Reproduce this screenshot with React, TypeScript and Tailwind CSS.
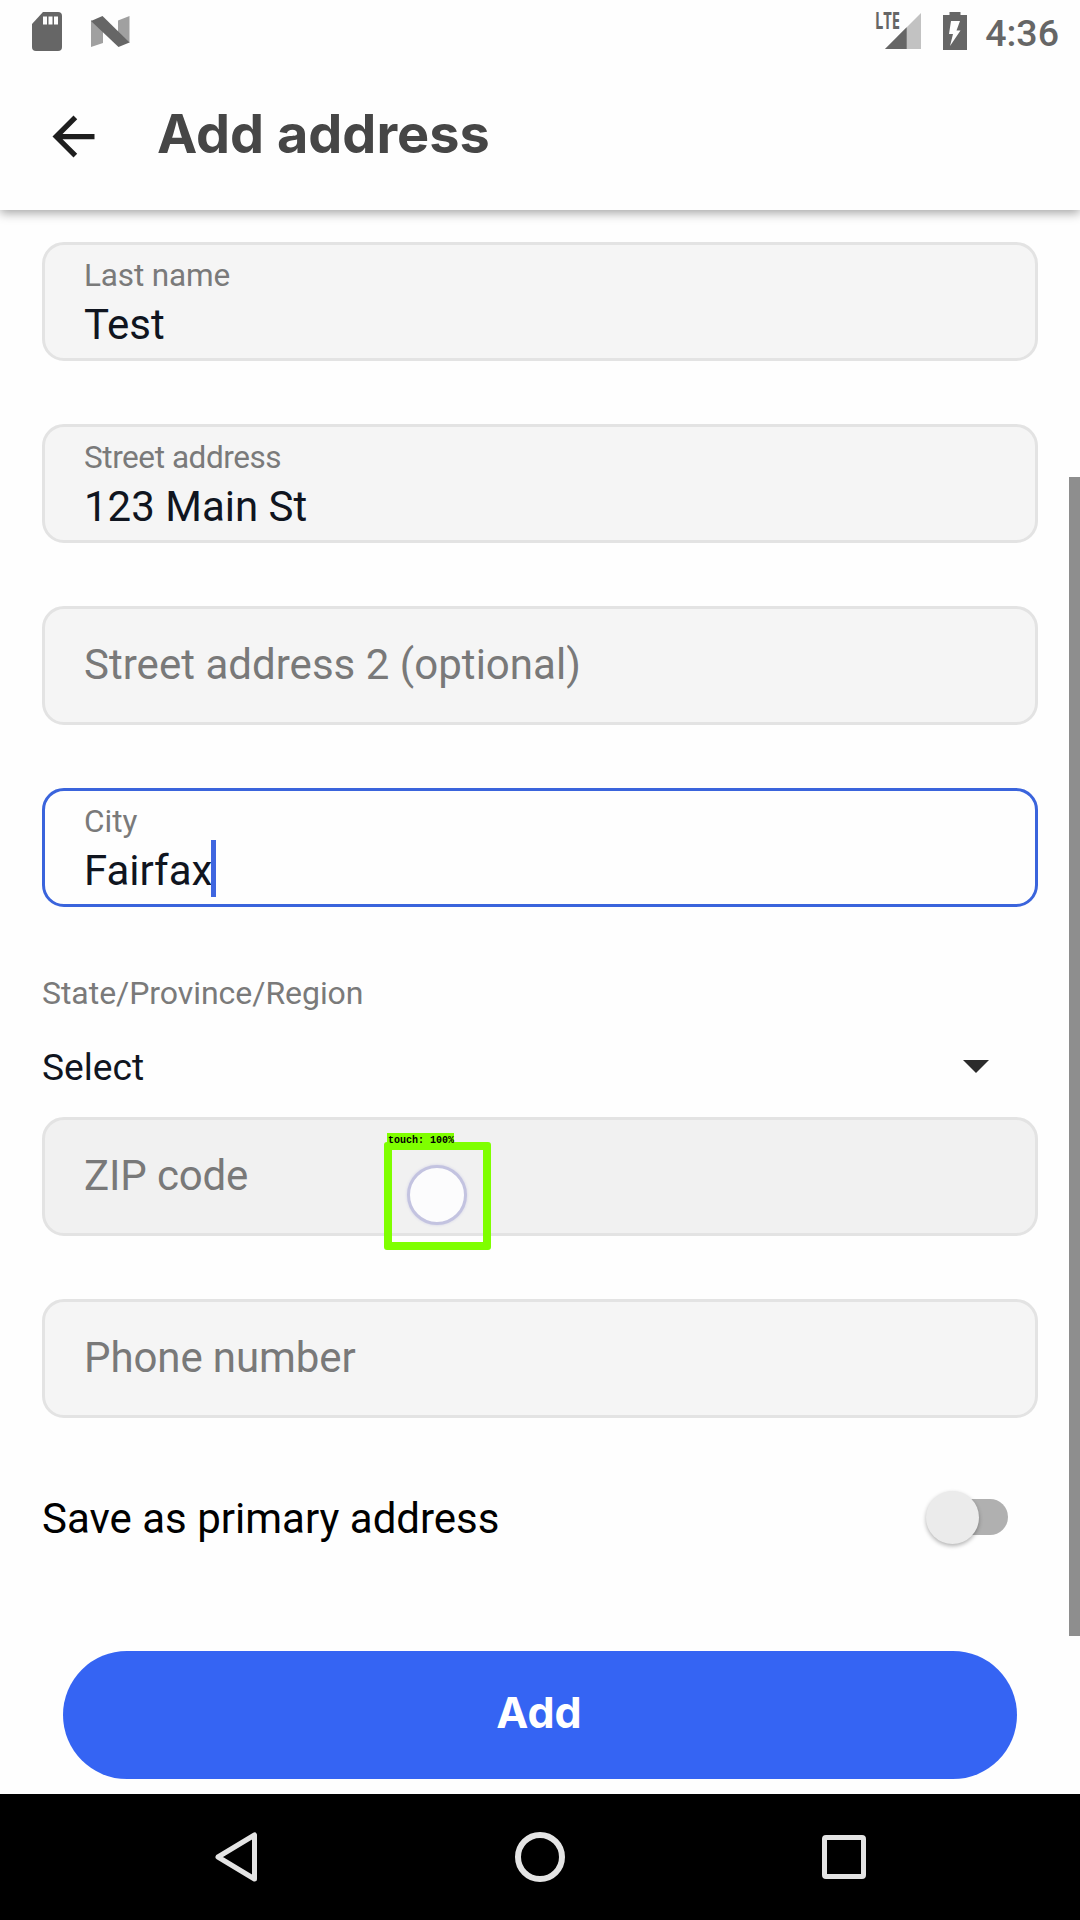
import React from "react";

type FieldProps = {
  label: string;
  value?: string;
  focused?: boolean;
  shade?: string;
  tracking?: string;
};

function Field({ label, value, focused, shade = "bg-[#f5f5f5]", tracking = "tracking-[0.03px]" }: FieldProps) {
  const frame = focused ? "border-[#3a64dc] bg-[#fefefe]" : "border-[#e3e3e3] " + shade;
  return (
    <div className={"flex h-[119px] w-full shrink-0 flex-col rounded-[22px] border-[3px] px-[39px] " + frame}>
      {value ? (
        <>
          <div className={"mt-[12px] h-[38px] text-[31.5px] leading-[38px] text-[#7a7a7a] " + tracking}>{label}</div>
          <div className="mt-[5px] flex h-[56px] items-start text-[42px] leading-[50px] text-[#10151f]">
            <span>{value}</span>
            {focused && <span className="-ml-[1px] -mt-[6px] h-[57px] w-[5px] shrink-0 bg-[#3f66e0]" />}
          </div>
        </>
      ) : (
        <div className={"mt-[31px] text-[42px] leading-[50px] text-[#797979] " + tracking}>{label}</div>
      )}
    </div>
  );
}

function StatusBar() {
  return (
    <div className="flex h-[63px] items-start justify-between pl-[32px] pr-[21px] text-[#666666]">
      <div className="flex pt-[12px]">
        <svg width="30" height="39" viewBox="0 0 30 39">
          <path fill="currentColor" d="M11 0H26Q30 0 30 4V35Q30 39 26 39H4Q0 39 0 35V12Z" />
          <path fill="#fefefe" d="M11 4.500h4v8h-4zM16.500 4.500h4v8h-4zM22 4.500h4v8h-4z" />
        </svg>
        <svg className="ml-[29px] mt-[4px]" width="39" height="31" viewBox="0 0 39 31">
          <path fill="#a0a0a0" d="M0 4L12 12V27L0 31ZM27 4.500L38.500 0V27L27 18Z" />
          <path fill="currentColor" d="M0 5L11.500 0L38.500 26.500L27.500 31Z" />
        </svg>
      </div>
      <div className="flex">
        <div className="relative mt-[13px] h-[36px] w-[45px]">
          <svg width="45" height="36" viewBox="0 0 45 36">
            <path fill="#c2c2c2" d="M45 0V36H9Z" />
            <path fill="currentColor" d="M30.700 14.300V36H9Z" />
          </svg>
          <span className="absolute -left-px -top-[4px] origin-left scale-x-[0.64] font-['Open_Sans'] text-[23px] font-bold leading-[23px]">LTE</span>
        </div>
        <svg className="ml-[22px] mt-[12px]" width="24" height="38" viewBox="0 0 24 38">
          <path fill="currentColor" d="M6.500 0H17.500V3H24V38H0V3H6.500Z" />
          <path fill="#fefefe" d="M8 9H17L13.500 18.500H17.500L7 34L10 22H6Z" />
        </svg>
        <span className="ml-[18px] mt-[11px] text-[37.5px] font-medium leading-[44px]">4:36</span>
      </div>
    </div>
  );
}

function TouchMarker() {
  return (
    <div className="absolute left-[384px] top-[1142px] h-[108px] w-[107px] rounded-[3px] border-[8px] border-[#7fff00]">
      <span className="absolute -left-[5px] -top-[17px] h-[12px] w-[67px] whitespace-pre bg-[#7fff00] pl-px font-['Liberation_Mono'] text-[10px] font-bold leading-[15px] text-black">touch: 100%</span>
      <div className="absolute left-[15px] top-[15px] h-[60px] w-[60px] rounded-full border-[3px] border-[#c3c3e0] bg-[#fcfcfd] shadow-[0_0_3px_#d0d0e6]" />
    </div>
  );
}

export default function App() {
  return (
    <div className="relative flex h-[1920px] w-[1080px] flex-col overflow-hidden bg-[#fefefe] font-['Roboto',sans-serif]">
      <header className="z-10 h-[210px] shrink-0 bg-[#fefefe] shadow-[0_3px_10px_rgba(0,0,0,0.36)]">
        <StatusBar />
        <div className="flex pl-[42px]">
          <svg className="mt-[42px]" width="63" height="63" viewBox="0 0 24 24">
            <path fill="#1e1e1e" d="M20 11H7.830l5.590-5.590L12 4l-8 8 8 8 1.410-1.410L7.830 13H20v-2z" />
          </svg>
          <h1 className="ml-[52px] mt-[39px] font-['Inter'] text-[54px] font-bold leading-[64px] text-[#464646]">Add address</h1>
        </div>
      </header>
      <main className="flex h-[1584px] shrink-0 flex-col px-[42px] pt-[32px]">
        <div className="flex flex-col gap-[63px]">
          <Field label="Last name" value="Test" tracking="tracking-[-0.15px]" />
          <Field label="Street address" value="123 Main St" tracking="tracking-[-0.43px]" />
          <Field label="Street address 2 (optional)" />
          <Field label="City" value="Fairfax" focused />
        </div>
        <div className="mt-[67px] h-[38px] text-[32px] leading-[38px] tracking-[-0.05px] text-[#7a7a7a]">State/Province/Region</div>
        <div className="mt-[33px] flex h-[44px] items-start justify-between pr-[49px] text-[37.2px] leading-[44px] text-[#10151f]">
          <span>Select</span>
          <svg className="mt-[15px]" width="26" height="13" viewBox="0 0 26 13"><path fill="#2b2b2b" d="M0 0H26L13 13Z" /></svg>
        </div>
        <div className="mt-[28px] flex flex-col gap-[63px]">
          <Field label="ZIP code" shade="bg-[#f1f1f1]" tracking="tracking-[-0.15px]" />
          <Field label="Phone number" tracking="tracking-[-0.1px]" />
        </div>
        <div className="mt-[72px] flex h-[58px] items-start justify-between pr-[30px] text-[42px] leading-[58px] text-black">
          <span>Save as primary address</span>
          <div className="mt-px flex h-[53px] w-[83px] items-center">
            <span className="z-10 ml-px h-[53px] w-[53px] rounded-full bg-[#ebebeb] shadow-[0_2px_4px_rgba(0,0,0,0.3)]" />
            <span className="-mt-px -ml-[31px] h-[36px] w-[60px] rounded-full bg-[#b0b0b0]" />
          </div>
        </div>
        <button className="mx-[21px] mt-[103px] h-[128px] shrink-0 rounded-full bg-[#3564f3] pb-[7px] pr-[2px] font-['Inter'] text-[43px] font-bold leading-[50px] text-white">Add</button>
      </main>
      <nav className="flex h-[126px] shrink-0 items-center justify-between bg-black pl-[215px] pr-[214px]">
        <svg width="44" height="50" viewBox="0 0 44 50"><path fill="none" stroke="#e4e4e4" strokeWidth="5" strokeLinejoin="round" d="M39.500 3V47L3 25Z" /></svg>
        <span className="mr-[1px] h-[50px] w-[50px] rounded-full border-[6px] border-[#e4e4e4]" />
        <span className="h-[44px] w-[44px] rounded-[4px] border-[5.5px] border-[#e4e4e4]" />
      </nav>
      <div className="absolute left-[1069px] top-[477px] h-[1159px] w-[11px] bg-[#8e8e8e]" />
      <TouchMarker />
    </div>
  );
}
